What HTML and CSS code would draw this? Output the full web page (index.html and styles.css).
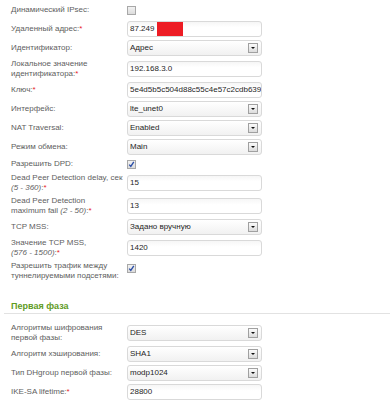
FILE: index.html
```html
<!DOCTYPE html>
<html>
<head>
<meta charset="utf-8">
<link rel="stylesheet" href="styles.css">
</head>
<body>
<div class="form first">
  <div class="row r1">
    <div class="label">Динамический IPsec:</div>
    <span class="checkbox"></span>
  </div>
  <div class="row">
    <div class="label">Удаленный адрес:<span class="req">*</span></div>
    <div class="field">87.249<span class="redact"></span></div>
  </div>
  <div class="row">
    <div class="label">Идентификатор:</div>
    <div class="field select">Адрес<span class="arrow"></span></div>
  </div>
  <div class="row">
    <div class="label">Локальное значение<br>идентификатора:<span class="req">*</span></div>
    <div class="field">192.168.3.0</div>
  </div>
  <div class="row">
    <div class="label">Ключ:<span class="req">*</span></div>
    <div class="field">5e4d5b5c504d88c55c4e57c2cdb639</div>
  </div>
  <div class="row">
    <div class="label">Интерфейс:</div>
    <div class="field select">lte_unet0<span class="arrow"></span></div>
  </div>
  <div class="row">
    <div class="label">NAT Traversal:</div>
    <div class="field select">Enabled<span class="arrow"></span></div>
  </div>
  <div class="row">
    <div class="label">Режим обмена:</div>
    <div class="field select">Main<span class="arrow"></span></div>
  </div>
  <div class="row cb">
    <div class="label">Разрешить DPD:</div>
    <span class="checkbox checked"><svg viewBox="0 0 9 9" width="9" height="9"><path d="M2.2 4.6 L3.8 6.4 L6.8 1.8" fill="none" stroke="#2c4fa8" stroke-width="1.4"/></svg></span>
  </div>
  <div class="row">
    <div class="label">Dead Peer Detection delay, сек<br><i>(5 - 360)</i>:<span class="req">*</span></div>
    <div class="field">15</div>
  </div>
  <div class="row">
    <div class="label">Dead Peer Detection<br>maximum fail <i>(2 - 50)</i>:<span class="req">*</span></div>
    <div class="field">13</div>
  </div>
  <div class="row">
    <div class="label">TCP MSS:</div>
    <div class="field select">Задано вручную<span class="arrow"></span></div>
  </div>
  <div class="row">
    <div class="label">Значение TCP MSS,<br><i>(576 - 1500)</i>:<span class="req">*</span></div>
    <div class="field">1420</div>
  </div>
  <div class="row top">
    <div class="label">Разрешить трафик между<br>туннелируемыми подсетями:</div>
    <span class="checkbox checked"><svg viewBox="0 0 9 9" width="9" height="9"><path d="M2.2 4.6 L3.8 6.4 L6.8 1.8" fill="none" stroke="#2c4fa8" stroke-width="1.4"/></svg></span>
  </div>
</div>
<div class="section">Первая фаза</div>
<div class="form">
  <div class="row">
    <div class="label">Алгоритмы шифрования<br>первой фазы:</div>
    <div class="field select">DES<span class="arrow"></span></div>
  </div>
  <div class="row">
    <div class="label">Алгоритм хэширования:</div>
    <div class="field select">SHA1<span class="arrow"></span></div>
  </div>
  <div class="row">
    <div class="label">Тип DHgroup первой фазы:</div>
    <div class="field select">modp1024<span class="arrow"></span></div>
  </div>
  <div class="row">
    <div class="label">IKE-SA lifetime:<span class="req">*</span></div>
    <div class="field">28800</div>
  </div>
</div>
</body>
</html>
```
FILE: styles.css
```css
html, body {
  margin: 0;
  padding: 0;
  background: #fff;
}
body {
  font-family: "Liberation Sans", Arial, sans-serif;
  font-size: 8px;
  color: #5e5e5e;
}
.form {
  padding-left: 11px;
}
.form.first {
  padding-top: 2px;
}
.row {
  display: flex;
  align-items: center;
  min-height: 16px;
  margin-bottom: 3px;
}
.row.cb {
  min-height: 12px;
}
.row.top {
  align-items: flex-start;
}
.row.top .checkbox {
  margin-top: 3px;
}
.label {
  width: 116px;
  flex: none;
  line-height: 10px;
  white-space: nowrap;
}
.label i {
  font-style: italic;
}
.req {
  color: #e8232a;
}
.field {
  position: relative;
  width: 135px;
  height: 16px;
  box-sizing: border-box;
  border: 1px solid #d9d9d9;
  border-radius: 3px;
  padding-left: 2px;
  line-height: 14px;
  color: #1e1e1e;
  white-space: nowrap;
  overflow: hidden;
  background: linear-gradient(#f6f6f6, #fff 40%);
}
.field.select {
  background: linear-gradient(#fff, #f1f1f1);
}
.arrow {
  position: absolute;
  right: 3px;
  top: 2px;
  width: 10px;
  height: 10px;
  box-sizing: border-box;
  border: 1px solid #a0a0a0;
  background: linear-gradient(#fbfbfb, #dcdcdc);
}
.arrow::after {
  content: "";
  position: absolute;
  left: 2px;
  top: 3px;
  border-left: 2px solid transparent;
  border-right: 2px solid transparent;
  border-top: 2px solid #111;
}
.redact {
  position: absolute;
  left: 29px;
  top: 0;
  width: 26px;
  height: 14px;
  background: #ed1c24;
}
.checkbox {
  display: inline-block;
  width: 9px;
  height: 9px;
  box-sizing: border-box;
  border: 1px solid #a8a8a8;
  background: linear-gradient(#f2f2f2, #dcdcdc);
  position: relative;
}
.checkbox svg {
  position: absolute;
  left: -1px;
  top: -1px;
}
.section {
  margin: 19px 0 9px 4px;
  padding-left: 7px;
  font-size: 9px;
  font-weight: bold;
  color: #5f9b1f;
  line-height: 13px;
  border-bottom: 1px solid #e2e2e2;
}
```
